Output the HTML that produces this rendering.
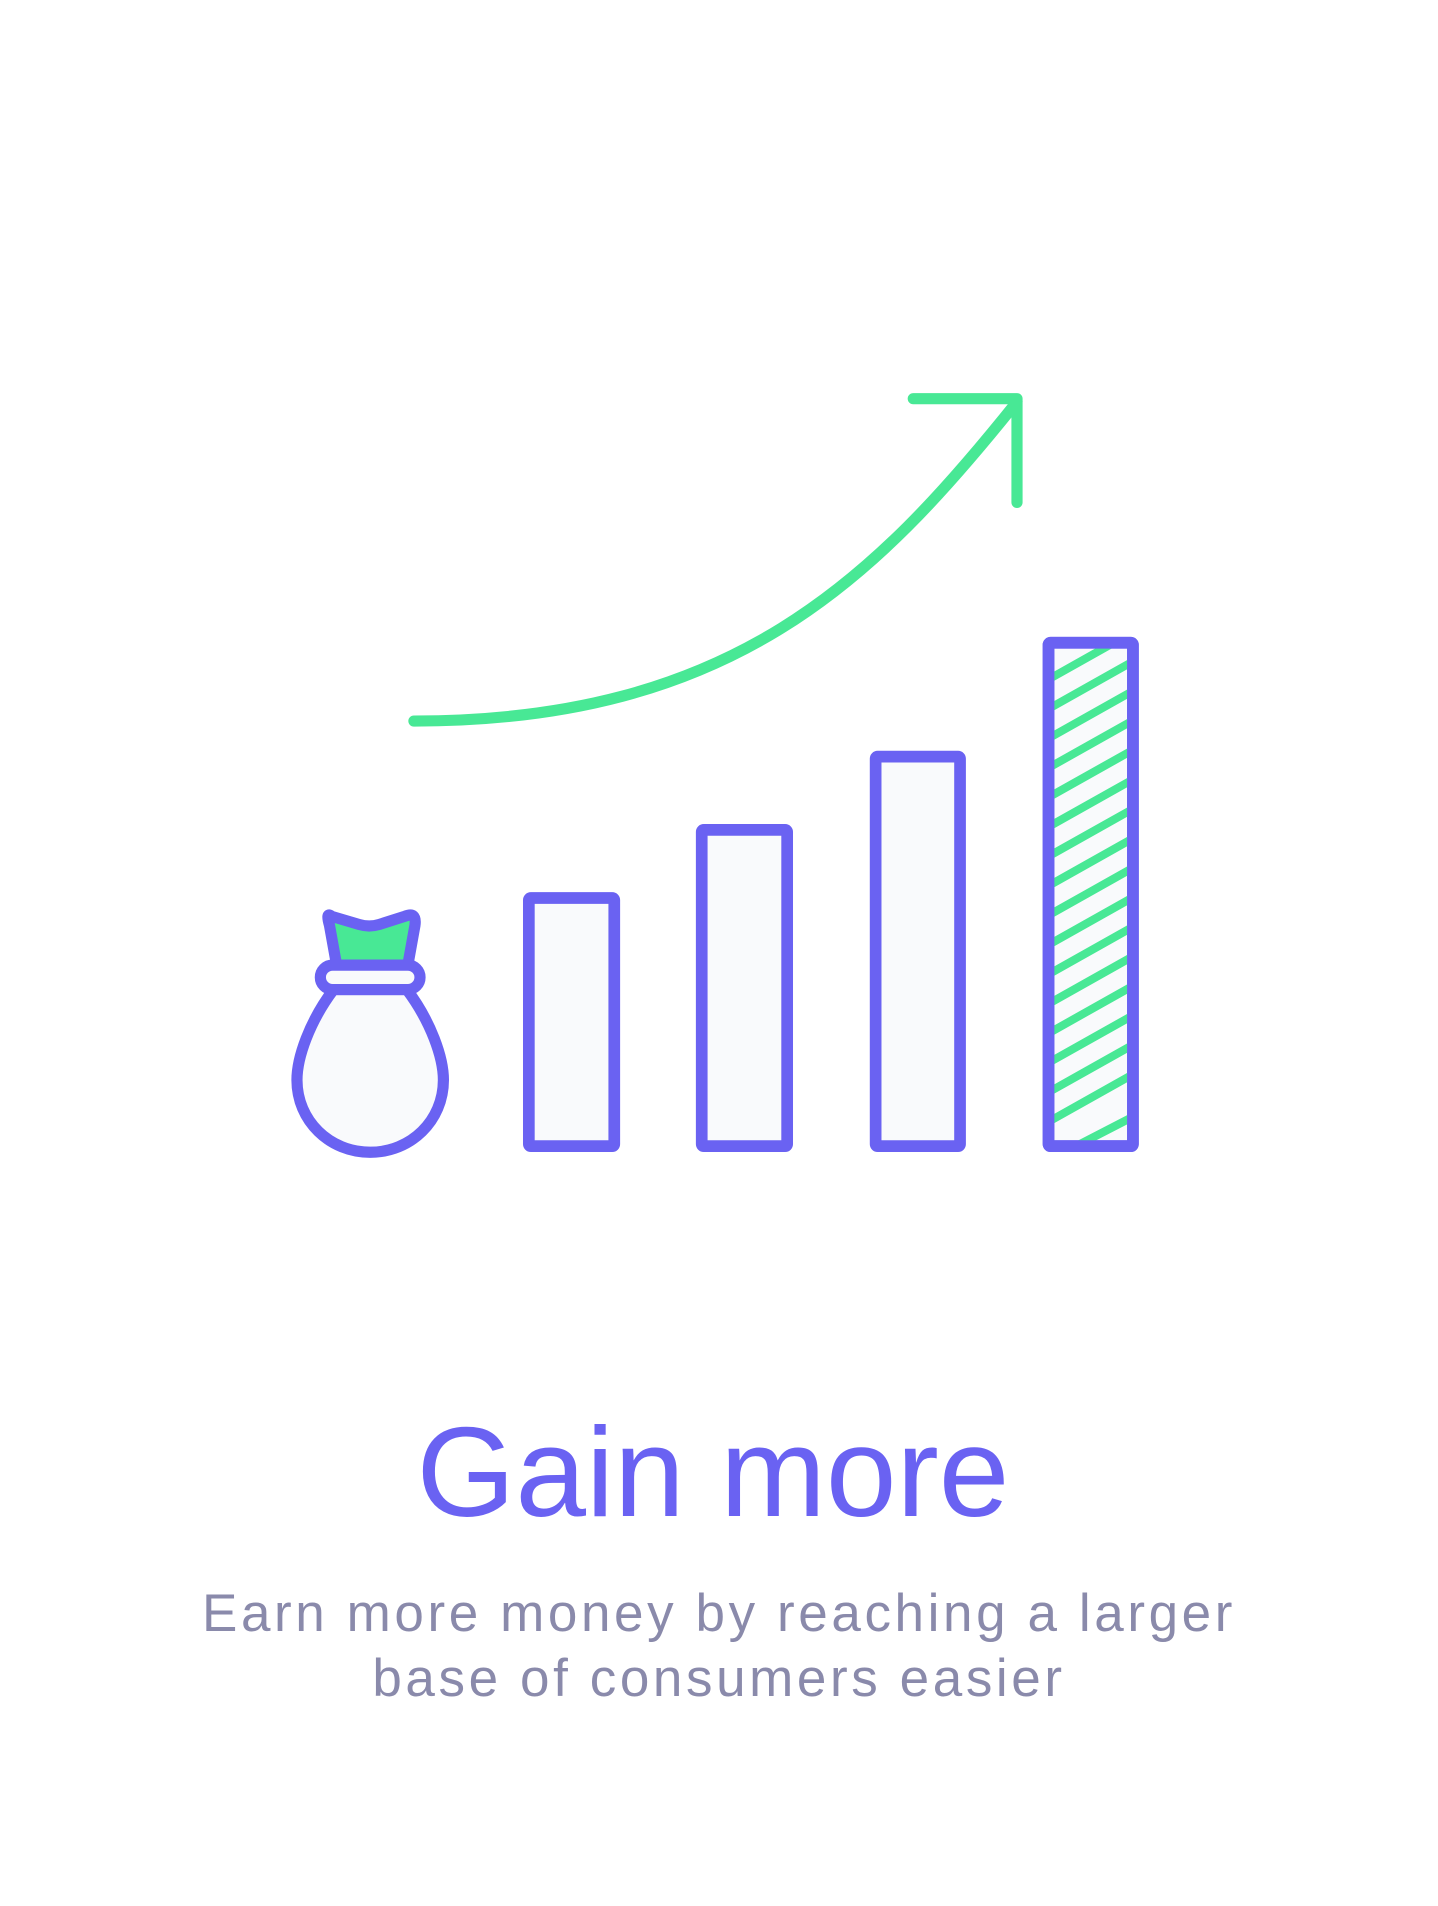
<!DOCTYPE html>
<html><head><meta charset="utf-8"><style>
html,body{margin:0;padding:0;background:#fff;width:1438px;height:1906px;overflow:hidden}
svg{position:absolute;left:0;top:0}
.t{position:absolute;left:0;width:1438px;text-align:center;font-family:"Liberation Sans",sans-serif}
</style></head><body>
<svg width="1438" height="1906" viewBox="0 0 1438 1906">
<defs><clipPath id="c"><rect x="1031" y="632" width="83" height="495"/></clipPath></defs>
<g transform="scale(1.017)">
<g fill="none" stroke="#48e895" stroke-width="11" stroke-linecap="round" stroke-linejoin="round">
<path d="M407 709 C720 709 860 570 1000 395"/>
<path d="M898 392 L1000 392 L1000 494"/>
</g>
<g stroke="#6a62f2" stroke-width="11.5" fill="#f9fafc" stroke-linejoin="round">
<rect x="520" y="883" width="84" height="244" rx="2"/>
<rect x="690" y="816" width="84" height="311" rx="2"/>
<rect x="861" y="744" width="83" height="383" rx="2"/>
<rect x="1031" y="632" width="83" height="495" rx="2"/>
</g>
<g clip-path="url(#c)" stroke="#48e895" stroke-width="8" stroke-linecap="round">
<path d="M1031 668 L1120 618 M1031 697 L1120 647 M1031 726 L1120 676 M1031 755 L1120 705 M1031 784 L1120 734 M1031 813 L1120 763 M1031 842 L1120 792 M1031 871 L1120 821 M1031 900 L1120 850 M1031 929 L1120 879 M1031 958 L1120 908 M1031 987 L1120 937 M1031 1016 L1120 966 M1031 1045 L1120 995 M1031 1074 L1120 1024 M1031 1103 L1120 1053 M1060 1126 L1120 1095"/>
</g>
<rect x="1031" y="632" width="83" height="495" rx="2" fill="none" stroke="#6a62f2" stroke-width="11.5"/>
<g stroke="#6a62f2" stroke-width="11" stroke-linejoin="round">
<path d="M326 901 Q320 896 324 910 L331 949 L401 949 L408 910 Q410 896 398 901 L373 909 Q363 912 353 909 Z" fill="#48e895"/>
<path d="M328 973 C304 1005 292 1040 292 1062 C292 1102 324 1133 364 1133 C404 1133 436 1102 436 1062 C436 1040 424 1005 400 973 Z" fill="#f9fafc"/>
<rect x="315" y="949" width="98" height="24" rx="12" fill="#f9fafc"/>
</g>
</g>
</svg>
<div class="t" style="top:1402px;font-size:127px;color:#6a62f2;line-height:140px;left:-6px">Gain more</div>
<div class="t" style="top:1581px;font-size:53px;color:#8a8aab;line-height:65px;letter-spacing:3.6px">Earn more money by reaching a larger<br>base of consumers easier</div>
</body></html>
